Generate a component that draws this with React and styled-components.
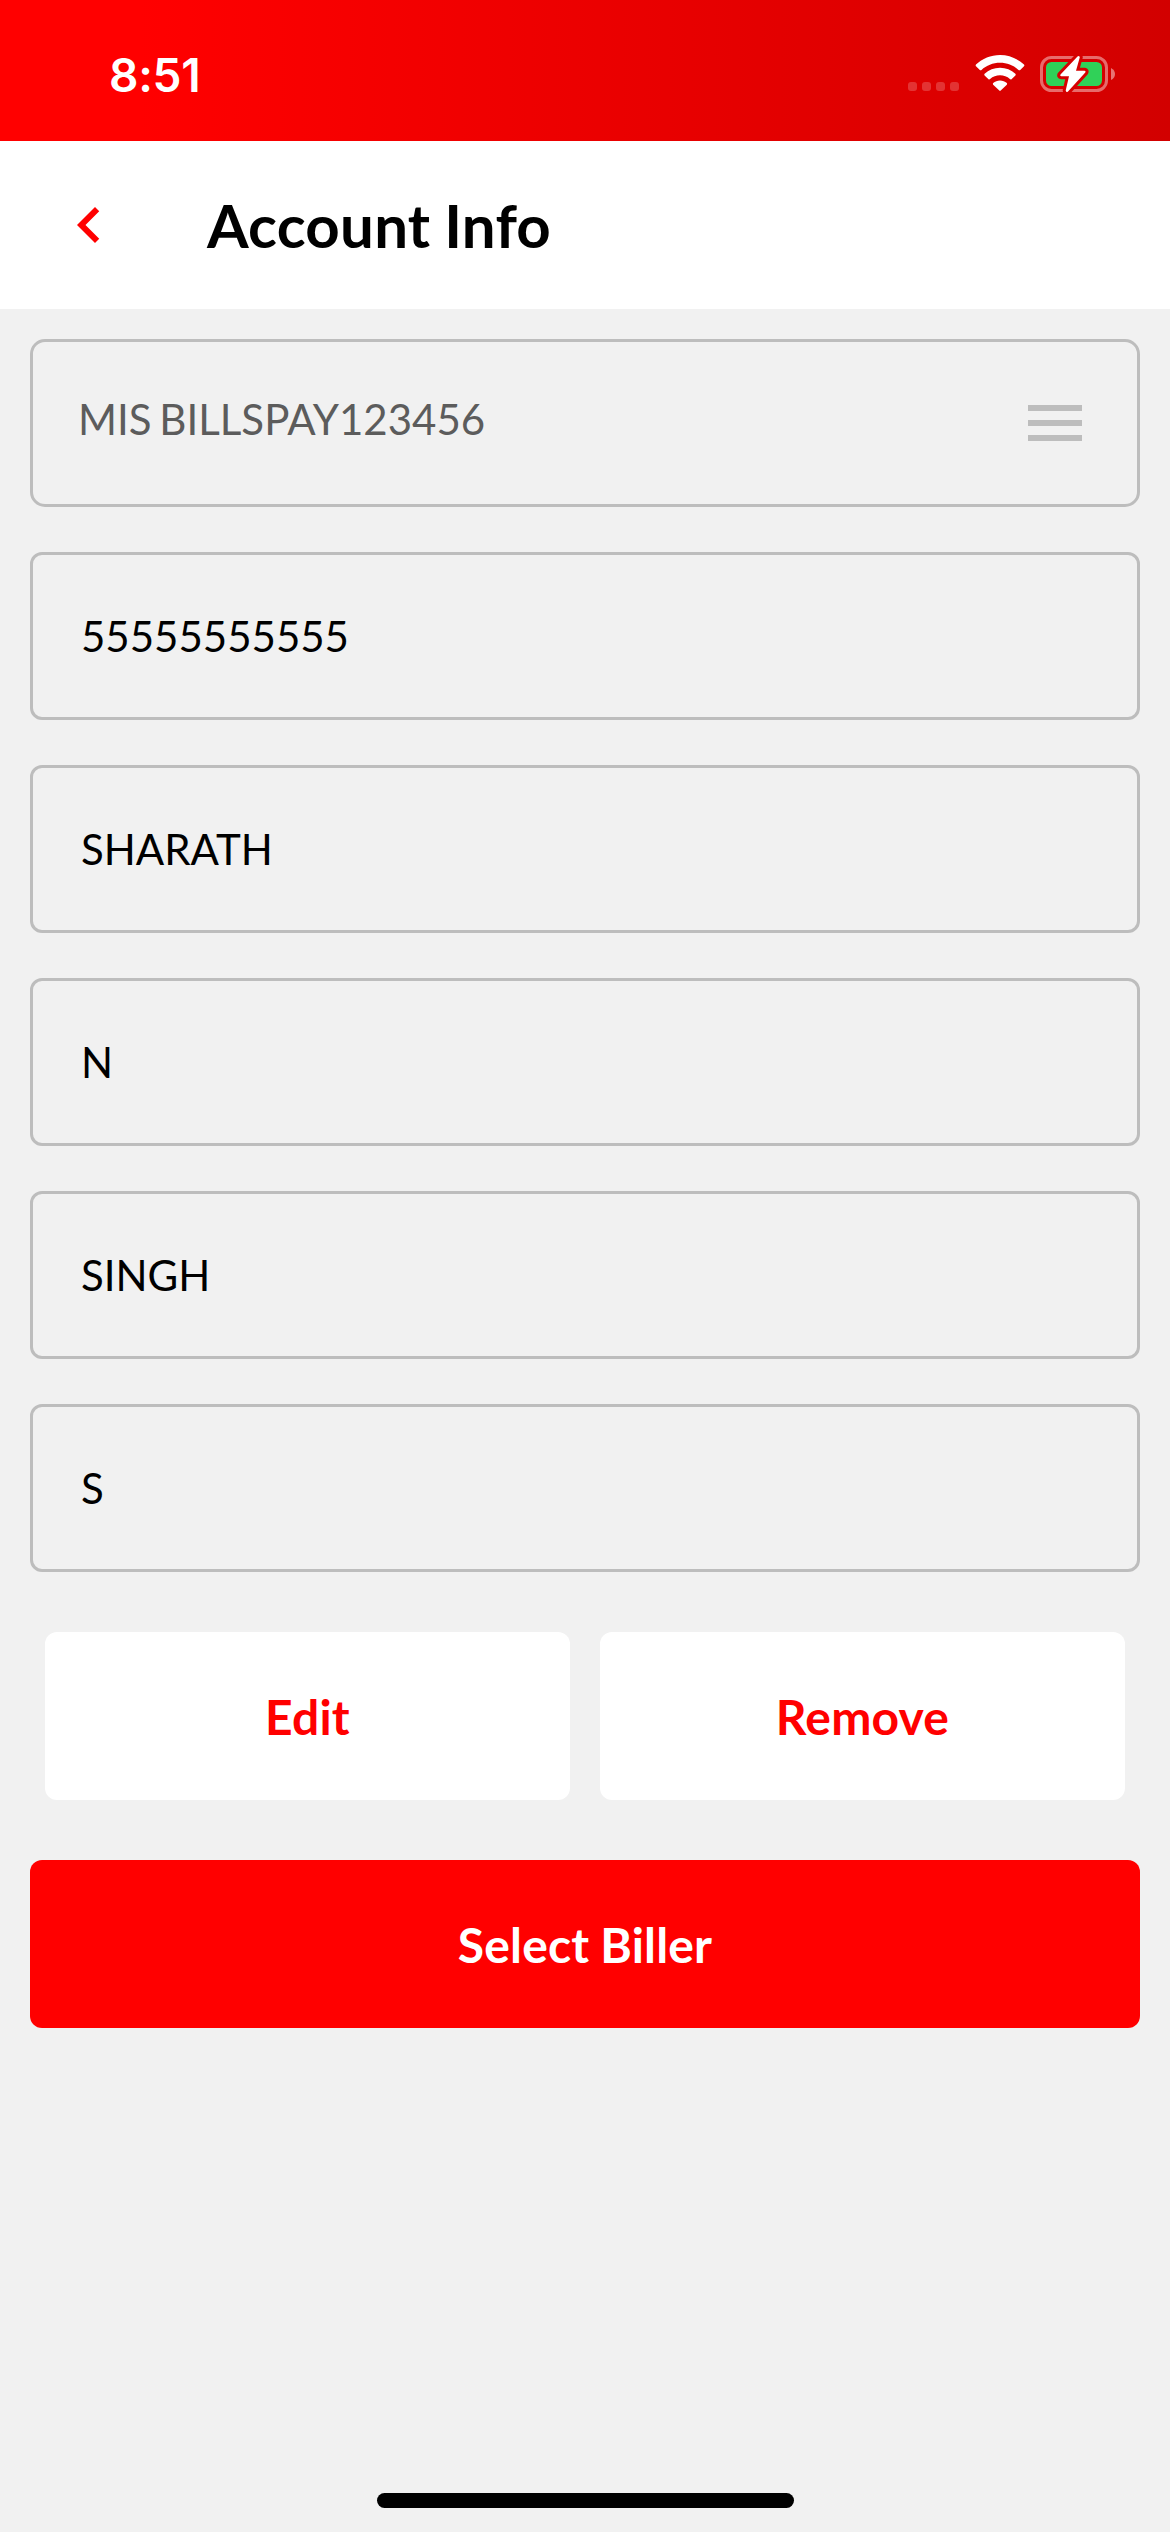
import React from "react";
import styled, { createGlobalStyle } from "styled-components";

const GlobalStyle = createGlobalStyle`
  * { box-sizing: border-box; }
  body { margin: 0; background: #f1f1f1; }
`;

const Screen = styled.div`
  display: flex;
  flex-direction: column;
  width: 1170px;
  height: 2532px;
  background: #f1f1f1;
  font-family: Lato, sans-serif;
  color: #000;
`;

const StatusBar = styled.header`
  display: flex;
  flex: none;
  align-items: flex-start;
  justify-content: space-between;
  height: 141px;
  padding: 0 54px 0 109px;
  background: linear-gradient(90deg, #ff0000 0%, #ff0000 12%, #d20000 100%);
`;

const Time = styled.span`
  padding-top: 46px;
  font: 600 46px/58px Inter, sans-serif;
  letter-spacing: -0.3px;
  color: #fff;
`;

const StatusIcons = styled.div`
  display: flex;
  align-items: flex-start;
  padding-top: 53px;
`;

const CellularDots = styled.div`
  display: flex;
  gap: 5px;
  padding-top: 29px;
  margin-right: 16px;
`;

const Dot = styled.i`
  width: 9px;
  height: 9px;
  border-radius: 3px;
  background: rgba(255, 255, 255, 0.2);
`;

const WifiIcon = styled.svg`
  display: block;
  margin-right: 15px;
`;

const BatteryIcon = styled.svg`
  display: block;
`;

const TitleBar = styled.div`
  display: flex;
  flex: none;
  align-items: center;
  gap: 82px;
  height: 168px;
  padding-left: 53px;
  background: #fff;
`;

const BackButton = styled.button`
  width: 72px;
  height: 72px;
  padding: 0;
  border: 0;
  background: none;
  color: #ff0000;
`;

const Glyph = styled.svg`
  display: block;
  width: 72px;
  height: 72px;
  fill: currentColor;
`;

const Title = styled.h1`
  margin: 0;
  font-size: 60px;
  font-weight: 700;
  line-height: 72px;
  letter-spacing: 0.25px;
  word-spacing: -1px;
`;

const Content = styled.main`
  display: flex;
  flex: 1;
  flex-direction: column;
  padding: 30px 30px 0;
`;

const FieldList = styled.div`
  display: flex;
  flex-direction: column;
  gap: 45px;
`;

const Field = styled.div`
  display: flex;
  align-items: center;
  justify-content: space-between;
  height: 168px;
  padding: 0 46px 0 ${(p) => (p.$muted ? 45 : 48)}px;
  border: 3px solid #bdbdbd;
  border-radius: ${(p) => (p.$muted ? 15 : 12)}px;
  color: ${(p) => (p.$muted ? "#5c5c5c" : "#000")};
  font-size: 42px;
  line-height: 50px;
  word-spacing: -3px;
`;

const FieldText = styled.span`
  padding-bottom: ${(p) => (p.$raised ? 8 : 0)}px;
`;

const MenuGlyph = styled(Glyph)`
  color: #bdbdbd;
`;

const ActionRow = styled.div`
  display: grid;
  grid-template-columns: 1fr 1fr;
  gap: 30px;
  padding: 60px 15px;
`;

const Button = styled.button`
  height: 168px;
  padding: 2px 0 0;
  border: 0;
  border-radius: 12px;
  background: ${(p) => (p.$primary ? "#ff0000" : "#fff")};
  color: ${(p) => (p.$primary ? "#fff" : "#ff0000")};
  font: 700 48px/58px Lato, sans-serif;
  letter-spacing: 0.2px;
  word-spacing: -1px;
`;

const HomeArea = styled.footer`
  display: flex;
  flex: none;
  justify-content: center;
  height: 39px;
`;

const HomeIndicator = styled.div`
  width: 417px;
  height: 15px;
  border-radius: 8px;
  background: #000;
`;

const values = ["55555555555", "SHARATH", "N", "SINGH", "S"];
const bolt = "M37.5 3.5 L20.5 21.5 Q19.5 23 21.3 23.2 H29 L25.7 37.5 Q26 39.8 28 38.4 L45.3 19.5 Q46.2 18 44.5 17.7 H36 L39.8 4.3 Q39.2 2.3 37.5 3.5Z";

export default function App() {
  return (
    <>
      <GlobalStyle />
      <Screen>
        <StatusBar>
          <Time>8:51</Time>
          <StatusIcons>
            <CellularDots>
              <Dot /><Dot /><Dot /><Dot />
            </CellularDots>
            <WifiIcon width="50" height="40" viewBox="0 0 50 40" fill="#fff">
              <path d="M25 2C34.2 2 42.700 5.600 49 11.600Q49.700 12.500 49 13.300L45.200 17Q44.400 17.700 43.500 17C38.600 12.400 32.100 9.800 25 9.800S11.400 12.400 6.500 17Q5.600 17.700 4.800 17L1 13.300Q.3 12.500 1 11.600C7.300 5.600 15.800 2 25 2Z" />
              <path d="M25 14.800C30.900 14.800 36.300 17 40.400 20.800Q41.200 21.700 40.400 22.500L36.500 26.200Q35.700 26.800 34.900 26.100A15 15 0 0 0 15.100 26.100Q14.300 26.800 13.500 26.200L9.600 22.500Q8.800 21.700 9.600 20.800C13.700 17 19.100 14.800 25 14.800Z" />
              <path d="M25 27.500C27.600 27.500 30 28.500 31.800 30.100Q32.500 31 31.800 31.700L25.700 37.600Q25 38.200 24.300 37.600L18.200 31.700Q17.500 31 18.200 30.100C20 28.500 22.400 27.500 25 27.500Z" />
            </WifiIcon>
            <BatteryIcon width="76" height="42" viewBox="0 0 76 42">
              <rect x="1.500" y="4.500" width="65" height="33" rx="10" fill="none" stroke="#fff" strokeOpacity=".42" strokeWidth="3" />
              <rect x="6" y="9" width="56" height="24" rx="5.500" fill="#30d158" />
              <path d="M71 15Q75 17 75 21T71 27Z" fill="#fff" fillOpacity=".45" />
              <path d={bolt} fill="#d60000" stroke="#d60000" strokeWidth="6" strokeLinejoin="round" />
              <path d={bolt} fill="#fff" />
            </BatteryIcon>
          </StatusIcons>
        </StatusBar>
        <TitleBar>
          <BackButton aria-label="Back">
            <Glyph viewBox="0 0 24 24">
              <path d="M15.410 7.410 14 6l-6 6 6 6 1.410-1.410L10.830 12z" />
            </Glyph>
          </BackButton>
          <Title>Account Info</Title>
        </TitleBar>
        <Content>
          <FieldList>
            <Field $muted>
              <FieldText $raised>MIS BILLSPAY123456</FieldText>
              <MenuGlyph viewBox="0 0 24 24">
                <path d="M3 18h18v-2H3v2zm0-5h18v-2H3v2zm0-7v2h18V6H3z" />
              </MenuGlyph>
            </Field>
            {values.map((value) => (
              <Field key={value}>
                <FieldText>{value}</FieldText>
              </Field>
            ))}
          </FieldList>
          <ActionRow>
            <Button>Edit</Button>
            <Button>Remove</Button>
          </ActionRow>
          <Button $primary>Select Biller</Button>
        </Content>
        <HomeArea>
          <HomeIndicator />
        </HomeArea>
      </Screen>
    </>
  );
}
